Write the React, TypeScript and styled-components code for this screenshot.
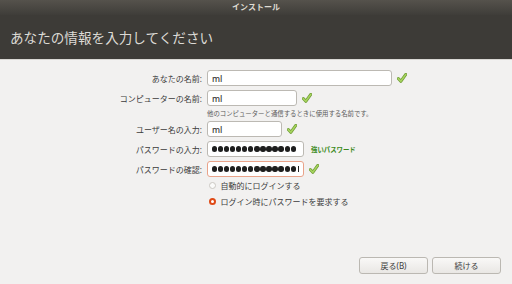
import * as React from "react";
import styled, { createGlobalStyle } from "styled-components";

const GlobalStyle = createGlobalStyle`
    html, body {
        margin: 0;
        padding: 0;
        background: #f2f1f0;
    }
    body {
        font-family: "Noto Sans", "Noto Sans CJK JP", sans-serif;
    }
`;

const Window = styled.div`
    width: 512px;
    height: 284px;
    display: flex;
    flex-direction: column;
    background: #f2f1f0;
    overflow: hidden;
`;

const Header = styled.div`
    height: 59px;
    background: #3d3b37;
    border-bottom: 1px solid #d9d7d3;
    display: flex;
    flex-direction: column;
`;

const TitleBar = styled.div`
    height: 15px;
    line-height: 14px;
    text-align: center;
    font-size: 8px;
    font-weight: 700;
    color: #dfdbd2;
    background: linear-gradient(#55524c, #3f3d39);
`;

const PageTitle = styled.h1`
    margin: 0;
    padding: 13px 0 0 10px;
    font-size: 13.6px;
    line-height: 20px;
    font-weight: 400;
    color: #dcdad5;
`;

const Content = styled.div`
    flex: 1;
    padding-top: 10px;
    display: flex;
    flex-direction: column;
`;

const Form = styled.div`
    display: flex;
    flex-direction: column;
    gap: 4px;
`;

const Row = styled.div`
    display: flex;
    align-items: center;
    height: 16px;
`;

const Label = styled.div`
    width: 207px;
    flex-shrink: 0;
    padding-right: 5px;
    box-sizing: border-box;
    text-align: right;
    font-size: 8px;
    color: #3c3c3c;
    white-space: nowrap;
`;

const Field = styled.div`
    display: flex;
    align-items: center;
    gap: 5px;
`;

const Input = styled.div<{ $width: number; $error?: boolean }>`
    width: ${(p) => p.$width}px;
    height: 16px;
    box-sizing: border-box;
    border: 1px solid ${(p) => (p.$error ? "#e9a38a" : "#bcb9b3")};
    border-radius: 3px;
    background: #fff;
    display: flex;
    align-items: center;
    padding-left: 4px;
    font-size: 8.5px;
    font-weight: 500;
    color: #333;
    overflow: hidden;
`;

const Dots = styled.div`
    flex: 1;
    min-width: 0;
    display: flex;
    justify-content: flex-end;
    gap: 0.7px;
    overflow: hidden;
    padding-right: 7px;
    position: relative;
`;

const Dot = styled.span`
    flex-shrink: 0;
    width: 5.4px;
    height: 5.4px;
    border-radius: 50%;
    background: #1e1e1e;
`;

const Cursor = styled.span`
    position: absolute;
    right: 4px;
    top: -3px;
    width: 1px;
    height: 11px;
    background: #222;
`;

const Hint = styled.div`
    padding-left: 207px;
    height: 7px;
    line-height: 7px;
    font-size: 6.4px;
    color: #5a5a5a;
    white-space: nowrap;
`;

const Strength = styled.span`
    margin-left: 2px;
    font-size: 6.4px;
    font-weight: 700;
    color: #3a8a1c;
    white-space: nowrap;
`;

const Radios = styled.div`
    margin-top: -1px;
    padding-left: 209px;
    display: flex;
    flex-direction: column;
    gap: 6px;
`;

const RadioRow = styled.div`
    display: flex;
    align-items: center;
    gap: 4.5px;
    height: 10px;
    font-size: 8px;
    color: #3c3c3c;
    white-space: nowrap;
`;

const RadioDot = styled.span<{ $checked?: boolean }>`
    width: 7px;
    height: 7px;
    box-sizing: border-box;
    border-radius: 50%;
    flex-shrink: 0;
    border: ${(p) => (p.$checked ? "2px solid #df4a16" : "1px solid #cbc8c3")};
    background: ${(p) => (p.$checked ? "#fff" : "#fbfbfa")};
`;

const Footer = styled.div`
    margin-top: auto;
    padding: 0 11px 10px 0;
    display: flex;
    justify-content: flex-end;
    gap: 4px;
`;

const Button = styled.button`
    width: 69px;
    height: 17px;
    padding: 0;
    border: 1px solid #bbb8b2;
    border-radius: 3px;
    background: linear-gradient(#f9f8f7, #e9e7e4);
    font-family: inherit;
    font-size: 8px;
    color: #3c3c3c;
`;

const Check: React.FC = () => (
    <svg width="10" height="10" viewBox="0 0 10 10">
        <path
            d="M1.3 5.6 L3.8 8.3 L8.8 1.4"
            fill="none"
            stroke="#6f9a35"
            strokeWidth="3"
            strokeLinecap="round"
            strokeLinejoin="round"
        />
        <path
            d="M1.3 5.6 L3.8 8.3 L8.8 1.4"
            fill="none"
            stroke="#a6d45e"
            strokeWidth="1.6"
            strokeLinecap="round"
            strokeLinejoin="round"
        />
    </svg>
);

const Password: React.FC<{ cursor?: boolean }> = ({ cursor }) => (
    <Dots>
        {Array.from({ length: 16 }, (_, i) => (
            <Dot key={i} />
        ))}
        {cursor && <Cursor />}
    </Dots>
);

export default function App() {
    return (
        <Window>
            <GlobalStyle />
            <Header>
                <TitleBar>インストール</TitleBar>
                <PageTitle>あなたの情報を入力してください</PageTitle>
            </Header>
            <Content>
                <Form>
                    <Row>
                        <Label>あなたの名前:</Label>
                        <Field>
                            <Input $width={185}>ml</Input>
                            <Check />
                        </Field>
                    </Row>
                    <Row>
                        <Label>コンピューターの名前:</Label>
                        <Field>
                            <Input $width={90}>ml</Input>
                            <Check />
                        </Field>
                    </Row>
                    <Hint>他のコンピューターと通信するときに使用する名前です。</Hint>
                    <Row>
                        <Label>ユーザー名の入力:</Label>
                        <Field>
                            <Input $width={75}>ml</Input>
                            <Check />
                        </Field>
                    </Row>
                    <Row>
                        <Label>パスワードの入力:</Label>
                        <Field>
                            <Input $width={97}>
                                <Password />
                            </Input>
                            <Strength>強いパスワード</Strength>
                        </Field>
                    </Row>
                    <Row>
                        <Label>パスワードの確認:</Label>
                        <Field>
                            <Input $width={97} $error>
                                <Password cursor />
                            </Input>
                            <Check />
                        </Field>
                    </Row>
                    <Radios>
                        <RadioRow>
                            <RadioDot />
                            自動的にログインする
                        </RadioRow>
                        <RadioRow>
                            <RadioDot $checked />
                            ログイン時にパスワードを要求する
                        </RadioRow>
                    </Radios>
                </Form>
                <Footer>
                    <Button>戻る(B)</Button>
                    <Button>続ける</Button>
                </Footer>
            </Content>
        </Window>
    );
}
